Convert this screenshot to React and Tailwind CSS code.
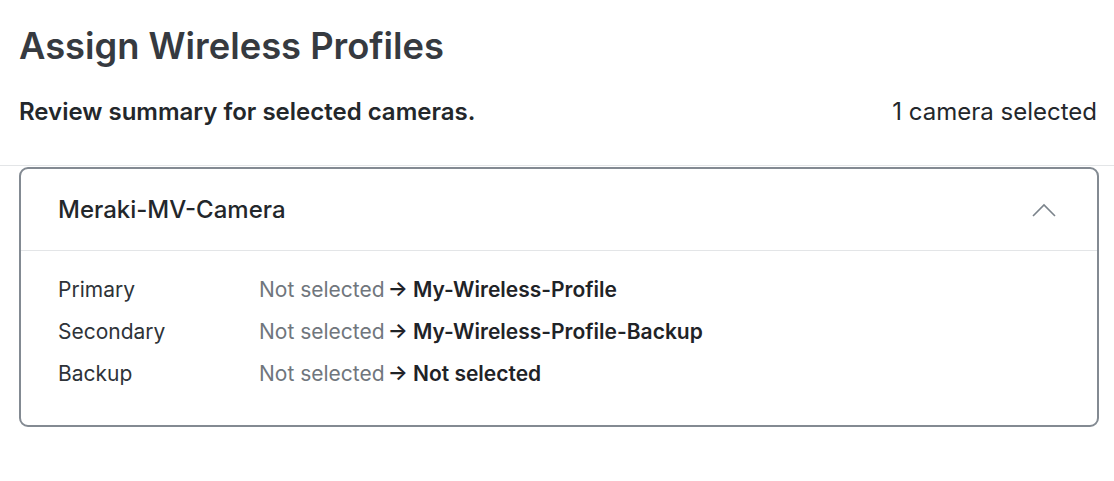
export default function App() {
  const rows = [
    ["Primary", "My-Wireless-Profile"],
    ["Secondary", "My-Wireless-Profile-Backup"],
    ["Backup", "Not selected"],
  ];
  return (
    <div className="w-[1114px] h-[481px] bg-white text-[#2e3338]" style={{ fontFamily: "Inter, 'Noto Sans', sans-serif" }}>
      <div className="pl-[19px] pr-[17px] pt-[24px]">
        <h1 className="text-[36.3px] leading-[44px] font-semibold text-[#363a40]">Assign Wireless Profiles</h1>
        <div className="flex justify-between items-center mt-[28px]">
          <div className="text-[24px] leading-[32px] font-semibold text-[#23272b]">Review summary for selected cameras.</div>
          <div className="text-[24px] leading-[32px] text-[#23272b]">1 camera selected</div>
        </div>
      </div>
      <div className="mt-[37px] border-t border-[#e3e5e7]" />
      <div className="mx-[19px] mt-[1px] w-[1080px] border-[2px] border-solid border-[#838a92] rounded-[9px]">
        <div className="flex items-center justify-between h-[82px] pl-[37px] pr-[41px] border-b border-[#e3e5e7]">
          <div className="text-[24px] font-medium text-[#23272b]">Meraki-MV-Camera</div>
          <svg width="24" height="14" viewBox="0 0 24 14" fill="none" stroke="#7b838b" strokeWidth="1.6">
            <path d="M1 13 L12 2 L23 13" />
          </svg>
        </div>
        <div className="pl-[37px] pt-[26px] pb-[38px] flex flex-col gap-[16px]">
          {rows.map(([k, v]) => (
            <div key={k} className="flex text-[21px] leading-[26px]">
              <div className="w-[201px] text-[#2e3338]">{k}</div>
              <div className="flex">
                <span className="text-[#70767d]">Not selected</span>
                <span className="font-semibold text-[#1f2327] ml-[3px]">→ {v}</span>
              </div>
            </div>
          ))}
        </div>
      </div>
    </div>
  );
}
